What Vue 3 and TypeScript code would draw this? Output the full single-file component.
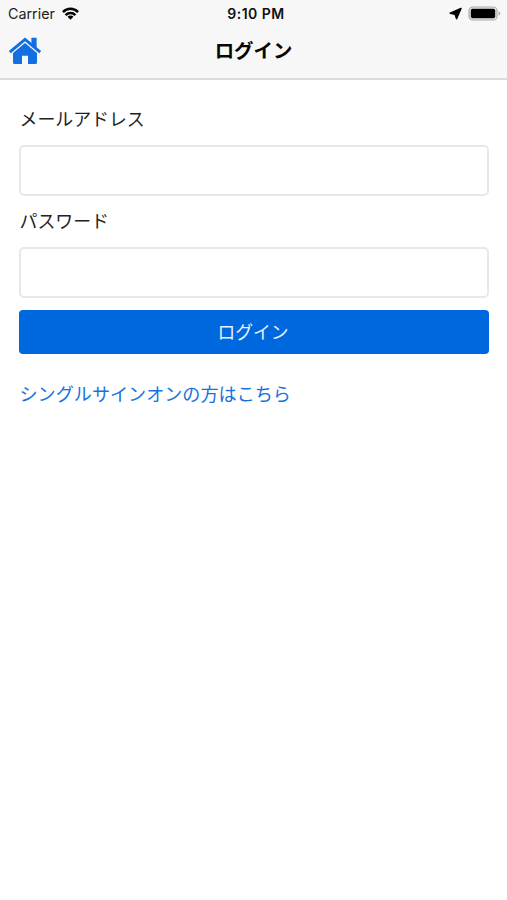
<script setup lang="ts">
import { ref } from 'vue'

const email = ref<string>('')
const password = ref<string>('')
</script>

<template>
  <div class="screen">
    <header class="header">
      <div class="status">
        <div class="status-left">
          <span class="carrier">Carrier</span>
          <svg class="wifi" viewBox="0 0 18 13" aria-hidden="true">
            <g fill="none" stroke="#050505" stroke-width="2.6">
              <path d="M1 5C5.4.4 12.6.4 17 5" />
              <path d="M3.8 8.1C6.7 5.2 11.3 5.2 14.2 8.1" />
            </g>
            <path d="M5.8 10C7.7 8.3 10.3 8.3 12.2 10L9 13Z" fill="#050505" />
          </svg>
        </div>
        <span class="time">9:10 PM</span>
        <div class="status-right">
          <svg class="location" viewBox="0 0 13 13" aria-hidden="true">
            <path d="M12 1.4L1.2 6.2L6 7.2L7.6 11.8Z" fill="#000" stroke="#000" stroke-width="1.4" stroke-linejoin="round" />
          </svg>
          <svg class="battery" viewBox="0 0 33 15" aria-hidden="true">
            <rect x="1" y="1" width="28" height="13" rx="3.8" fill="#e8e8e8" stroke="#aaa" stroke-width="1.2" />
            <rect x="2.8" y="2.8" width="24.4" height="9.4" rx="1.8" fill="#000" />
            <path d="M30.5 5.3Q32.2 6 32.2 7.5T30.5 9.7Z" fill="#aaa" />
          </svg>
        </div>
      </div>
      <div class="nav">
        <a class="home" href="#" aria-label="ホーム">
          <svg viewBox="0 0 34 28" aria-hidden="true">
            <path d="M1.8 15.2L17 2.4L32.2 15.2" fill="none" stroke="#136ee2" stroke-width="3" />
            <path d="M23.4 .8H28.6V11L23.4 6.5Z" fill="#136ee2" />
            <path d="M17 6L29 16V25.4Q29 27 27.4 27H20V18.8H14V27H6.6Q5 27 5 25.4V16Z" fill="#136ee2" />
          </svg>
        </a>
        <h1 class="title">ログイン</h1>
      </div>
    </header>
    <form class="form" @submit.prevent>
      <label class="label" for="email">メールアドレス</label>
      <input id="email" v-model="email" class="input" type="email" />
      <label class="label" for="password">パスワード</label>
      <input id="password" v-model="password" class="input" type="password" />
      <button class="submit" type="submit">ログイン</button>
      <a class="sso" href="#">シングルサインオンの方はこちら</a>
    </form>
  </div>
</template>

<style>
body {
  background: #fff;
}
</style>

<style scoped>
.screen {
  min-height: 900px;
  background: #fff;
  color: #222;
  font-family: Inter, "Noto Sans CJK JP", sans-serif;
}
.header {
  box-sizing: border-box;
  height: 80px;
  background: #f7f7f7;
  border-bottom: 2px solid #dcdcdc;
}
.status {
  display: grid;
  grid-template-columns: 1fr auto 1fr;
  align-items: center;
  height: 27px;
  padding: 0 6px 0 8px;
}
.status-left,
.status-right {
  display: flex;
  align-items: center;
}
.status-left {
  gap: 7px;
}
.status-right {
  justify-content: flex-end;
  gap: 6px;
}
.carrier {
  font-size: 14.3px;
  line-height: 26px;
}
.time {
  padding-left: 3px;
  color: #111;
  font-size: 14px;
  font-weight: 600;
  letter-spacing: 0.5px;
  line-height: 26px;
}
.wifi {
  width: 17px;
  height: 13px;
}
.location {
  width: 13px;
  height: 13px;
}
.battery {
  width: 33px;
  height: 15px;
}
.nav {
  display: grid;
  grid-template-columns: 1fr auto 1fr;
  align-items: center;
  height: 47px;
  padding: 0 8px;
}
.home {
  display: block;
  width: 34px;
  height: 28px;
}
.home svg {
  display: block;
  width: 100%;
  height: 100%;
}
.title {
  margin: 0;
  color: #050505;
  font-size: 19.4px;
  font-weight: 700;
  line-height: 28px;
}
.form {
  display: flex;
  flex-direction: column;
  padding: 25px 18px 0 19px;
}
.label {
  height: 28px;
  padding-left: 0.5px;
  font-size: 17.9px;
  line-height: 29px;
}
.input {
  box-sizing: border-box;
  width: 100%;
  height: 51px;
  margin: 12px 0 11px;
  padding: 0 14px;
  border: 2px solid #e8e8e8;
  border-radius: 5px;
  background: #fff;
  font: inherit;
  font-size: 18px;
  outline: none;
}
.submit {
  box-sizing: border-box;
  height: 44px;
  margin: 1px 0 0;
  padding: 2px 2px 0 0;
  border: 0;
  border-radius: 4px;
  background: #0068df;
  color: #e8f3ff;
  font: inherit;
  font-size: 17.8px;
  line-height: 42px;
}
.sso {
  align-self: flex-start;
  margin-top: 26px;
  padding-left: 0.5px;
  color: #1672df;
  font-size: 18.1px;
  line-height: 28px;
  text-decoration: none;
}
</style>
